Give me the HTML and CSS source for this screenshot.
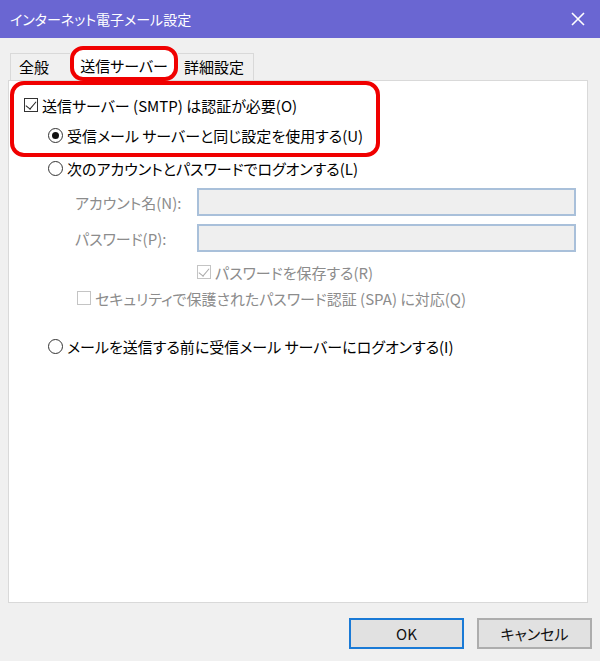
FILE: index.html
```html
<!DOCTYPE html>
<html lang="ja">
<head>
    <meta charset="UTF-8">
    <title>インターネット電子メール設定</title>
    <link rel="stylesheet" href="styles.css">
</head>
<body>

    <!-- Title bar -->
    <div class="titlebar">
        <span class="title">インターネット電子メール設定</span>
        <svg class="close" width="16" height="16" viewBox="0 0 16 16">
            <path d="M2 2 L14 14 M14 2 L2 14" stroke="#fff" stroke-width="1.6" fill="none"/>
        </svg>
    </div>

    <div class="dialog">
        <!-- Tabs -->
        <div class="tabs">
            <div class="tab">全般</div>
            <div class="tab active">送信サーバー</div>
            <div class="tab">詳細設定</div>
        </div>

        <!-- Tab page -->
        <div class="panel">
            <div class="highlight">
                <div class="row">
                    <span class="check checked"></span>
                    <span>送信サーバー (SMTP) は認証が必要(O)</span>
                </div>
                <div class="row sub">
                    <span class="radio selected"></span>
                    <span>受信メール サーバーと同じ設定を使用する(U)</span>
                </div>
            </div>

            <div class="row logon">
                <span class="radio"></span>
                <span>次のアカウントとパスワードでログオンする(L)</span>
            </div>

            <div class="field account">
                <span class="label">アカウント名(N):</span>
                <span class="textbox"></span>
            </div>
            <div class="field password">
                <span class="label">パスワード(P):</span>
                <span class="textbox"></span>
            </div>

            <div class="row save disabled">
                <span class="check checked"></span>
                <span>パスワードを保存する(R)</span>
            </div>
            <div class="row spa disabled">
                <span class="check"></span>
                <span>セキュリティで保護されたパスワード認証 (SPA) に対応(Q)</span>
            </div>

            <div class="row before">
                <span class="radio"></span>
                <span>メールを送信する前に受信メール サーバーにログオンする(I)</span>
            </div>
        </div>

        <!-- Buttons -->
        <div class="buttons">
            <button class="btn default">OK</button>
            <button class="btn">キャンセル</button>
        </div>
    </div>

</body>
</html>
```

FILE: styles.css
```css
* {
    box-sizing: border-box;
}

body {
    margin: 0;
    background-color: #f0f0f0;
    font-family: "Noto Sans CJK JP", "Noto Sans", sans-serif;
    font-size: 15px;
    font-feature-settings: "palt";
    color: #000;
}

/* Window caption */
.titlebar {
    height: 38px;
    background-color: #6a66d2;
    display: flex;
    align-items: center;
    justify-content: space-between;
    padding: 0 14px 0 10px;
    color: #fff;
    font-size: 14px;
}

.close {
    display: block;
}

.dialog {
    padding: 7px 12px 0 8px;
}

/* Tab strip */
.tabs {
    display: flex;
    align-items: flex-end;
    height: 35px;
    padding-left: 2px;
}

.tab {
    height: 27px;
    padding: 0 8px;
    line-height: 25px;
    white-space: nowrap;
    background-color: #f0f0f0;
    border: 1px solid #d9d9d9;
    border-bottom: none;
}

.tab:first-child {
    width: 60px;
    border-right: none;
}

.tab.active {
    height: 35px;
    width: 108px;
    padding: 0;
    text-align: center;
    line-height: 31px;
    background-color: #fff;
    border: 4px solid #f00000;
    border-radius: 13px;
    position: relative;
    z-index: 1;
    margin-bottom: -1px;
}

.tab:last-child {
    width: 76px;
    padding: 0 6px;
    border-left: none;
}

/* Tab page */
.panel {
    height: 523px;
    background-color: #fff;
    border: 1px solid #d9d9d9;
}

.highlight {
    width: 370px;
    height: 76px;
    margin-left: 1px;
    padding: 5px 0 0 10px;
    border: 4px solid #f00000;
    border-radius: 14px;
}

.row {
    display: flex;
    align-items: center;
    gap: 4px;
    height: 30px;
    white-space: nowrap;
}

.row.sub {
    padding-left: 24px;
}

.row.logon {
    height: 22px;
    padding-left: 39px;
}

.row.save {
    height: 22px;
    margin-top: 9px;
    padding-left: 188px;
}

.row.spa {
    height: 22px;
    margin-top: 4px;
    padding-left: 68px;
}

.row.before {
    height: 22px;
    margin-top: 26px;
    padding-left: 39px;
}

.disabled {
    color: #8c8c8c;
}

/* Check boxes and radio buttons */
.check {
    width: 14px;
    height: 14px;
    border: 1px solid #333;
    background-color: #fff;
    position: relative;
    flex: none;
}

.check.checked::after {
    content: '';
    position: absolute;
    left: 3px;
    top: 0px;
    width: 5px;
    height: 9px;
    border: solid #222;
    border-width: 0 1.5px 1.5px 0;
    transform: rotate(40deg);
}

.disabled .check {
    border-color: #c4c4c4;
}

.disabled .check.checked::after {
    border-color: #a8a8a8;
}

.radio {
    width: 15px;
    height: 15px;
    border: 1px solid #333;
    border-radius: 50%;
    background-color: #fff;
    position: relative;
    flex: none;
}

.radio.selected::after {
    content: '';
    position: absolute;
    left: 3px;
    top: 3px;
    width: 7px;
    height: 7px;
    border-radius: 50%;
    background-color: #111;
}

/* Account fields */
.field {
    display: flex;
    align-items: center;
    height: 28px;
    padding-left: 66px;
    padding-right: 11px;
    color: #8c8c8c;
}

.field.account {
    margin-top: 9px;
}

.field.password {
    margin-top: 8px;
}

.label {
    width: 122px;
    flex: none;
}

.textbox {
    flex: 1;
    height: 28px;
    background-color: #efefef;
    border: 2px solid #a9c0da;
}

/* Dialog buttons */
.buttons {
    display: flex;
    justify-content: flex-end;
    gap: 13px;
    margin-top: 15px;
    margin-right: -4px;
}

.btn {
    width: 115px;
    height: 31px;
    font: inherit;
    font-size: 15px;
    color: #111;
    background-color: #e1e1e1;
    border: 2px solid #adadad;
}

.btn.default {
    border-color: #1a7ad6;
}
```
